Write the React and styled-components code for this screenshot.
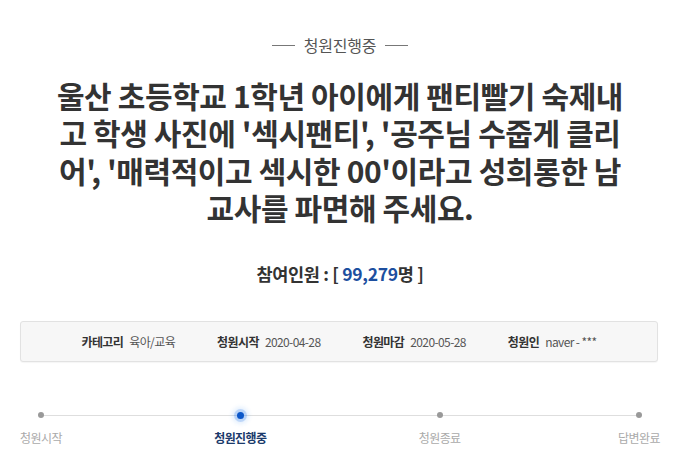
import React from 'react';
import styled, { createGlobalStyle } from 'styled-components';

const GlobalStyle = createGlobalStyle`
  body {
    margin: 0;
    background: #fff;
    font-family: "Noto Sans CJK KR", "Noto Sans", sans-serif;
  }
`;

export const Page = styled.div`
  width: 680px;
  height: 469px;
  padding-top: 35px;
  box-sizing: border-box;
  overflow: hidden;
`;

export const Status = styled.div`
  display: flex;
  justify-content: center;
  align-items: center;
  gap: 9px;
  font-size: 16px;
  line-height: 20px;
  color: #555;
  letter-spacing: -0.2px;
`;

export const Dash = styled.span`
  width: 23px;
  height: 1px;
  background: #777;
`;

export const Title = styled.h1`
  margin: 22px 0 0;
  text-align: center;
  font-size: 30px;
  font-weight: 700;
  line-height: 37.3px;
  letter-spacing: -0.4px;
  color: #333;
  white-space: nowrap;
`;

export const Count = styled.p`
  margin: 36px 0 0;
  text-align: center;
  font-size: 17.5px;
  font-weight: 700;
  line-height: 24px;
  color: #333;
  letter-spacing: -0.3px;
`;

export const Number = styled.span`
  color: #1d4f9f;
`;

export const InfoBox = styled.ul`
  list-style: none;
  margin: 35px 22px 0 20px;
  padding: 0;
  height: 41px;
  display: flex;
  justify-content: center;
  align-items: center;
  gap: 42px;
  background: #f7f7f7;
  border: 1px solid #e2e2e2;
  border-radius: 3px;
  box-sizing: border-box;
  box-shadow: 0 1px 1px rgba(0, 0, 0, 0.04);
`;

export const InfoItem = styled.li`
  display: flex;
  gap: 6px;
  font-size: 12px;
  letter-spacing: -0.6px;
`;

export const InfoLabel = styled.strong`
  color: #333;
  font-weight: 700;
`;

export const InfoValue = styled.span`
  color: #555;
`;

export const Steps = styled.ol`
  list-style: none;
  margin: 45px 0 0;
  padding: 0;
  display: flex;
  justify-content: space-between;
  background: linear-gradient(#dedede, #dedede) no-repeat;
  background-size: calc(100% - 82px) 1px;
  background-position: 41px 8px;
`;

export const Step = styled.li`
  width: 82px;
  display: flex;
  flex-direction: column;
  align-items: center;
  gap: 7px;
`;

export const DotWrap = styled.span`
  height: 16px;
  display: flex;
  align-items: center;
  justify-content: center;
`;

export const Dot = styled.span`
  width: ${({ $active }) => ($active ? 7 : 6)}px;
  height: ${({ $active }) => ($active ? 7 : 6)}px;
  border-radius: 50%;
  background: ${({ $active }) => ($active ? '#0b57c9' : '#999')};
  box-shadow: ${({ $active }) =>
    $active
      ? '0 0 0 3px rgba(40,120,230,0.22), 0 0 4px 5px rgba(60,140,240,0.14)'
      : 'none'};
`;

export const StepLabel = styled.span`
  font-size: 12px;
  line-height: 16px;
  letter-spacing: -0.6px;
  white-space: nowrap;
  color: ${({ $active }) => ($active ? '#1b3a6b' : '#aaa')};
  font-weight: ${({ $active }) => ($active ? 700 : 400)};
`;

const info = [
  { label: '카테고리', value: '육아/교육' },
  { label: '청원시작', value: '2020-04-28' },
  { label: '청원마감', value: '2020-05-28' },
  { label: '청원인', value: 'naver - ***' },
];

const steps = ['청원시작', '청원진행중', '청원종료', '답변완료'];

export default function App() {
  return (
    <Page>
      <GlobalStyle />
      <Status>
        <Dash />
        청원진행중
        <Dash />
      </Status>
      <Title>
        울산 초등학교 1학년 아이에게 팬티빨기 숙제내
        <br />
        고 학생 사진에 '섹시팬티', '공주님 수줍게 클리
        <br />
        어', '매력적이고 섹시한 00'이라고 성희롱한 남
        <br />
        교사를 파면해 주세요.
      </Title>
      <Count>
        참여인원 : [ <Number>99,279</Number>명 ]
      </Count>
      <InfoBox>
        {info.map(({ label, value }) => (
          <InfoItem key={label}>
            <InfoLabel>{label}</InfoLabel>
            <InfoValue>{value}</InfoValue>
          </InfoItem>
        ))}
      </InfoBox>
      <Steps>
        {steps.map((s, i) => (
          <Step key={s}>
            <DotWrap>
              <Dot $active={i === 1} />
            </DotWrap>
            <StepLabel $active={i === 1}>{s}</StepLabel>
          </Step>
        ))}
      </Steps>
    </Page>
  );
}
